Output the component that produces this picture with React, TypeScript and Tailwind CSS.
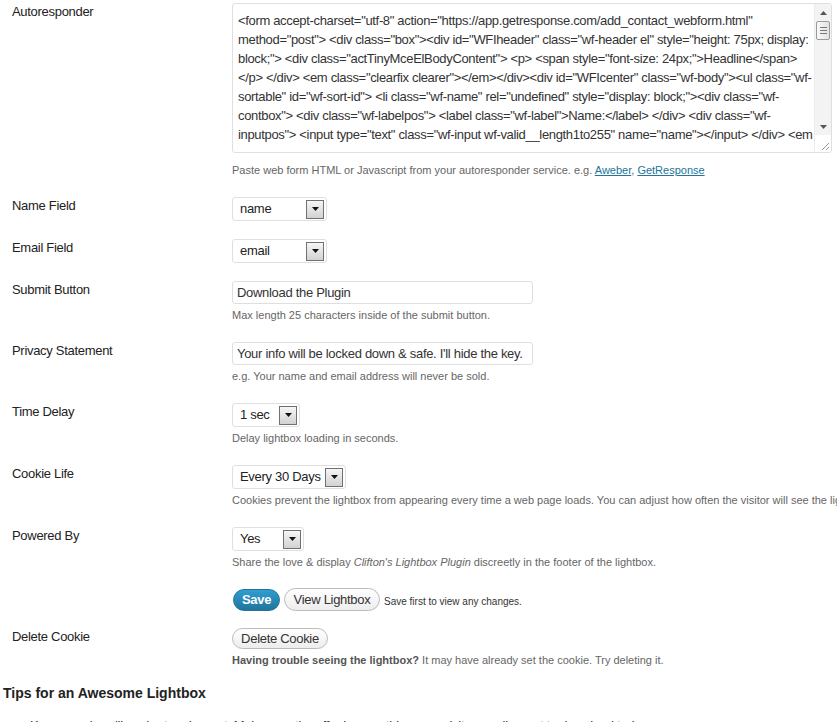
import type { ReactNode } from "react";

const FONT = { fontFamily: '"Liberation Sans", Arial, sans-serif' };

const CODE_LINES = [
  '<form accept-charset="utf-8" action="https://app.getresponse.com/add_contact_webform.html"',
  'method="post"> <div class="box"><div id="WFIheader" class="wf-header el" style="height: 75px; display:',
  'block;"> <div class="actTinyMceElBodyContent"> <p> <span style="font-size: 24px;">Headline</span>',
  '</p> </div> <em class="clearfix clearer"></em></div><div id="WFIcenter" class="wf-body"><ul class="wf-',
  'sortable" id="wf-sort-id"> <li class="wf-name" rel="undefined" style="display: block;"><div class="wf-',
  'contbox"> <div class="wf-labelpos"> <label class="wf-label">Name:</label> </div> <div class="wf-',
  'inputpos"> <input type="text" class="wf-input wf-valid__length1to255" name="name"></input> </div> <em',
];

function Row({ label, className, children }: { label?: string; className?: string; children: ReactNode }) {
  return (
    <div className={`flex ${className ?? ""}`}>
      <div className="w-[232px] shrink-0 pl-[12px] text-[13px] leading-[17px] tracking-[-0.3px] text-[#222]">{label}</div>
      <div className="min-w-0 flex-1">{children}</div>
    </div>
  );
}

function Desc({ children }: { children: ReactNode }) {
  return <div className="mt-[4px] whitespace-nowrap text-[11px] leading-[15px] text-[#666]">{children}</div>;
}

function Select({ value, width }: { value: string; width: string }) {
  return (
    <div className={`flex h-[24px] items-center rounded-[3px] border border-[#dfdfdf] bg-white pl-[7px] pr-[2px] ${width}`}>
      <span className="flex-1 whitespace-nowrap text-[13px] tracking-[-0.3px] text-[#222]">{value}</span>
      <span className="flex h-[19px] w-[18px] shrink-0 items-center justify-center border border-[#707070] bg-gradient-to-b from-[#f6f6f6] to-[#d2d2d2]">
        <svg width="7" height="4" viewBox="0 0 7 4">
          <path d="M0 0h7L3.5 4z" fill="#111" />
        </svg>
      </span>
    </div>
  );
}

function TextInput({ value }: { value: string }) {
  return (
    <div className="flex h-[23px] w-[301px] items-center whitespace-nowrap rounded-[3px] border border-[#dfdfdf] bg-white px-[4px] text-[13px] tracking-[-0.3px] text-[#333]">
      {value}
    </div>
  );
}

function PillButton({ children, className }: { children: ReactNode; className?: string }) {
  return (
    <button
      type="button"
      className={`flex items-center justify-center whitespace-nowrap rounded-full border border-[#bbb] bg-gradient-to-b from-white to-[#ededed] text-[13px] tracking-[-0.3px] text-[#333] ${className ?? ""}`}
    >
      {children}
    </button>
  );
}

function Scrollbar() {
  return (
    <div className="flex w-[17px] shrink-0 flex-col border-l border-[#ececec] bg-[#f3f3f3]">
      <div className="flex h-[17px] items-center justify-center">
        <svg width="7" height="4" viewBox="0 0 7 4">
          <path d="M0 4h7L3.5 0z" fill="#555" />
        </svg>
      </div>
      <div className="mx-[1px] flex h-[19px] flex-col items-center justify-center gap-[2px] rounded-[2px] border border-[#9a9a9a] bg-gradient-to-r from-[#fafafa] to-[#e2e2e2]">
        <span className="h-px w-[7px] bg-[#777]" />
        <span className="h-px w-[7px] bg-[#777]" />
        <span className="h-px w-[7px] bg-[#777]" />
      </div>
      <div className="flex-1" />
      <div className="flex h-[17px] items-center justify-center">
        <svg width="7" height="4" viewBox="0 0 7 4">
          <path d="M0 0h7L3.5 4z" fill="#555" />
        </svg>
      </div>
      <div className="flex h-[17px] items-end justify-end bg-white pb-[2px] pr-[2px]">
        <svg width="8" height="8" viewBox="0 0 8 8">
          <path d="M8 1L1 8M8 5L5 8" stroke="#999" strokeWidth="1" />
        </svg>
      </div>
    </div>
  );
}

export default function App() {
  return (
    <div className="h-[722px] w-[837px] overflow-hidden bg-white pt-[3px]" style={FONT}>
      <Row label="Autoresponder">
        <div className="flex h-[150px] w-[600px] overflow-hidden rounded-[3px] border border-[#dfdfdf] bg-white">
          <div className="flex-1 overflow-hidden pl-[5px] pt-[7px] text-[13px] leading-[19px] tracking-[-0.33px] text-[#333]">
            {CODE_LINES.map((line) => (
              <div key={line} className="whitespace-nowrap">
                {line}
              </div>
            ))}
          </div>
          <Scrollbar />
        </div>
        <div className="mt-[9px] whitespace-nowrap text-[11px] leading-[16px] text-[#666]">
          Paste web form HTML or Javascript from your autoresponder service. e.g.{" "}
          <span className="text-[#21759b] underline">Aweber</span>,{" "}
          <span className="text-[#21759b] underline">GetResponse</span>
        </div>
      </Row>

      <Row label="Name Field" className="mt-[19px]">
        <Select value="name" width="w-[95px]" />
      </Row>

      <Row label="Email Field" className="mt-[18px]">
        <Select value="email" width="w-[95px]" />
      </Row>

      <Row label="Submit Button" className="mt-[18px]">
        <TextInput value="Download the Plugin" />
        <Desc>Max length 25 characters inside of the submit button.</Desc>
      </Row>

      <Row label="Privacy Statement" className="mt-[19px]">
        <TextInput value="Your info will be locked down & safe. I'll hide the key." />
        <Desc>e.g. Your name and email address will never be sold.</Desc>
      </Row>

      <Row label="Time Delay" className="mt-[19px]">
        <Select value="1 sec" width="w-[68px]" />
        <Desc>Delay lightbox loading in seconds.</Desc>
      </Row>

      <Row label="Cookie Life" className="mt-[19px]">
        <Select value="Every 30 Days" width="w-[114px]" />
        <Desc>
          Cookies prevent the lightbox from appearing every time a web page loads. You can adjust how often the visitor
          will see the lightbox.
        </Desc>
      </Row>

      <Row label="Powered By" className="mt-[19px]">
        <Select value="Yes" width="w-[72px]" />
        <Desc>
          Share the love &amp; display <em>Clifton's Lightbox Plugin</em> discreetly in the footer of the lightbox.
        </Desc>
      </Row>

      <Row className="mt-[18px]">
        <div className="flex items-center">
          <button
            type="button"
            className="ml-px flex h-[22px] w-[47px] items-center justify-center rounded-full border border-[#21759b] bg-gradient-to-b from-[#2e9fd2] to-[#21759b] text-[13px] font-bold tracking-[-0.3px] text-white"
          >
            Save
          </button>
          <PillButton className="ml-[4px] h-[23px] w-[96px]">View Lightbox</PillButton>
          <span className="ml-[4px] mt-[3px] whitespace-nowrap text-[10px] text-[#333]">Save first to view any changes.</span>
        </div>
      </Row>

      <Row label="Delete Cookie" className="mt-[17px]">
        <PillButton className="h-[21px] w-[96px]">Delete Cookie</PillButton>
        <Desc>
          <span className="font-bold text-[#555]">Having trouble seeing the lightbox?</span> It may have already set the
          cookie. Try deleting it.
        </Desc>
      </Row>

      <h3 className="mt-[16px] pl-[3px] text-[14px] font-bold leading-[18px] text-[#222]">Tips for an Awesome Lightbox</h3>
      <ul className="mt-[14px] pl-[30px] text-[13px] leading-[19px] tracking-[-0.3px] text-[#333]">
        <li className="whitespace-nowrap">
          Keep your headline short and sweet. Make sure the offer is something your visitors really want to download today.
        </li>
      </ul>
    </div>
  );
}
